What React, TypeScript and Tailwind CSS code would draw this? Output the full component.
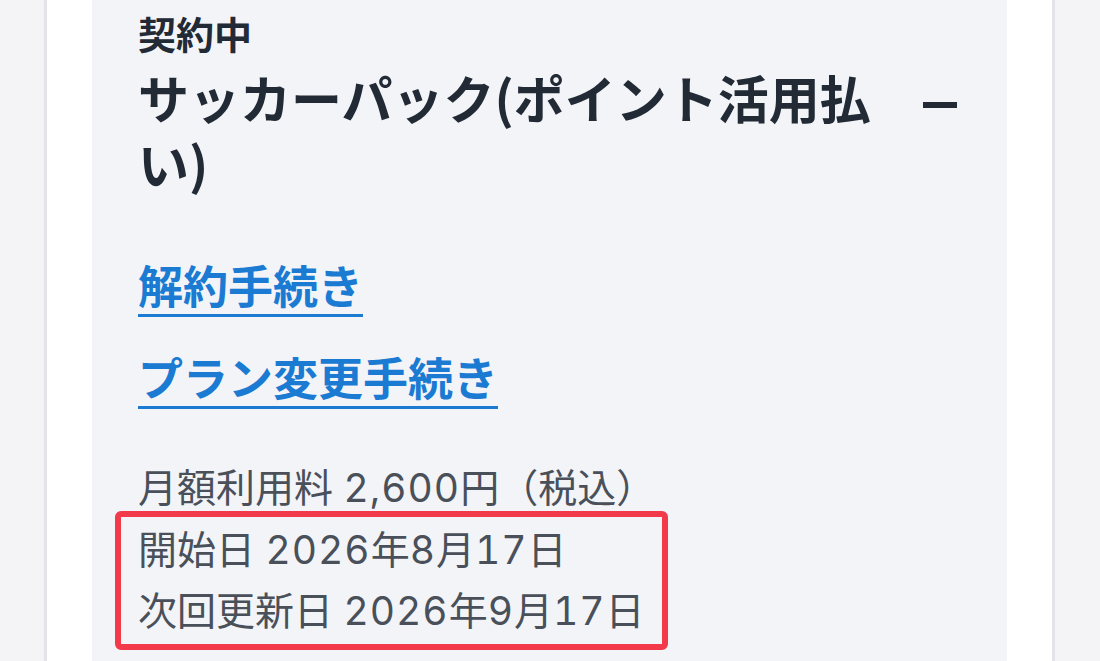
import React from "react";

function Num({ children }: { children: React.ReactNode }) {
  return <span className="tracking-[1px]">{children}</span>;
}

export default function App() {
  return (
    <div className="min-h-screen w-full bg-[#f4f4f7] overflow-hidden" style={{ height: 661 }}>
      <div className="ml-[44px] w-[1011px] h-full border-x-[3px] border-[#e3e4e9] bg-white px-[45px]">
        <div className="h-full bg-[#f3f4f7] pl-[46px] pr-[46px] pt-[8px] font-['Noto_Sans_CJK_JP',sans-serif]">
          <div className="text-[38px] leading-[50px] font-bold text-[#222a36]">契約中</div>
          <div className="mt-[6px] flex items-start">
            <h2 className="flex-1 min-w-0 text-[51px] leading-[66px] font-bold text-[#222a36]">
              サッカーパック(ポイント活用払い)
            </h2>
            <div className="shrink-0 ml-[40px] mr-[4px] mt-[38px] w-[34px] h-[6px] bg-[#222a36]" />
          </div>
          <div className="mt-[59px] flex flex-col items-start gap-[30px]">
            <a className="inline-block text-[45px] leading-[59px] font-bold text-[#1b7bd3] border-b-[3px] border-[#1b7bd3]">
              解約手続き
            </a>
            <a className="inline-block text-[45px] leading-[59px] font-bold text-[#1b7bd3] border-b-[3px] border-[#1b7bd3]">
              プラン変更手続き
            </a>
          </div>
          <div className="mt-[48px] whitespace-nowrap text-[39px] leading-[61.5px] text-[#4a505a] tabular-nums font-['Inter','Noto_Sans_CJK_JP',sans-serif]">
            <div>
              月額利用料 <Num>2,600</Num>円（税込）
            </div>
            <div className="-mx-[23px] -my-[8px] w-[553px] rounded-[6px] border-[6px] border-[#f23a4b] px-[17px] py-[2px]">
              <div>
                開始日 <Num>2026</Num>年<Num>8</Num>月<Num>17</Num>日
              </div>
              <div>
                次回更新日 <Num>2026</Num>年<Num>9</Num>月<Num>17</Num>日
              </div>
            </div>
          </div>
        </div>
      </div>
    </div>
  );
}
